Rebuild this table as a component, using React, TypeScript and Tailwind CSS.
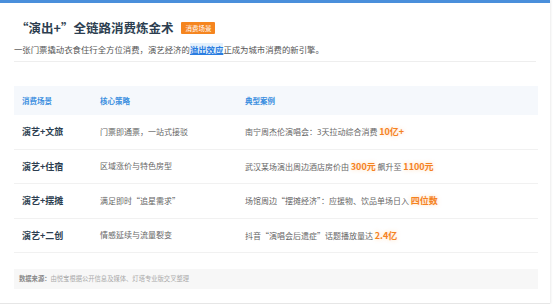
const rows = [
  {
    scene: "演艺+文旅",
    strategy: "门票即通票，一站式接驳",
    case: ["南宁周杰伦演唱会：3天拉动综合消费 ", "10亿+"],
  },
  {
    scene: "演艺+住宿",
    strategy: "区域涨价与特色房型",
    case: ["武汉某场演出周边酒店房价由 ", "300元", " 飙升至 ", "1100元"],
  },
  {
    scene: "演艺+摆摊",
    strategy: "满足即时“追星需求”",
    case: ["场馆周边“摆摊经济”：应援物、饮品单场日入 ", "四位数"],
  },
  {
    scene: "演艺+二创",
    strategy: "情感延续与流量裂变",
    case: ["抖音“演唱会后遗症”话题播放量达 ", "2.4亿"],
  },
];

function Highlight({ children }: { children: string }) {
  return (
    <span className="text-[9px] font-bold text-[#f5821f] [text-shadow:0_0_4px_rgba(255,150,40,0.35)]">
      {children}
    </span>
  );
}

export default function App() {
  return (
    <div className="w-[550px] h-[304px] bg-white border-t-[3px] border-[#4a8fdb] border-b border-b-[#e6e6e6] shadow-[1px_0_2px_rgba(0,0,0,0.08)] px-[14px] font-['Noto_Sans_CJK_SC',sans-serif]">
      {/* Title */}
      <div className="pt-[16px] flex items-center gap-[8px] pl-[2px]">
        <h1 className="text-[12.5px] leading-[17px] font-bold text-[#2c3e50]">
          “演出+”全链路消费炼金术
        </h1>
        <span className="bg-[#f5851f] text-white text-[6.5px] leading-[12px] px-[4px] rounded-[1px]">
          消费场景
        </span>
      </div>
      <p className="mt-[7px] text-[8.4px] leading-[12px] text-[#555]">
        一张门票撬动衣食住行全方位消费，演艺经济的
        <span className="font-bold text-[#2a7de1] underline bg-[#e3f0fc]">溢出效应</span>
        正成为城市消费的新引擎。
      </p>
      <div className="mt-[6px] h-px bg-[#eeeeee]" />

      {/* Table */}
      <div className="mt-[24px] w-[524px]">
        <div className="flex items-center h-[29px] bg-[#f5f8fc] text-[7.5px] font-bold text-[#3b8fe0]">
          <div className="w-[86px] pl-[8px]">消费场景</div>
          <div className="w-[145px]">核心策略</div>
          <div className="flex-1">典型案例</div>
        </div>
        {rows.map((row, i) => (
          <div key={i} className="flex items-center h-[34.5px] border-b border-[#f1f1f1]">
            <div className="w-[86px] pl-[8px] text-[9px] font-bold text-[#2c3e50]">{row.scene}</div>
            <div className="w-[145px] text-[8px] text-[#666]">{row.strategy}</div>
            <div className="flex-1 text-[8px] text-[#666]">
              {row.case.map((part, j) =>
                j % 2 === 1 ? <Highlight key={j}>{part}</Highlight> : <span key={j}>{part}</span>
              )}
            </div>
          </div>
        ))}
      </div>

      {/* Source */}
      <div className="mt-[16px] w-[524px] h-[20px] bg-[#f7f7f7] flex items-center pl-[5px] text-[6.3px] text-[#aaa]">
        <span className="font-bold text-[#888]">数据来源：</span>
        由悦宝根据公开信息及媒体、灯塔专业版交叉整理
      </div>
    </div>
  );
}
